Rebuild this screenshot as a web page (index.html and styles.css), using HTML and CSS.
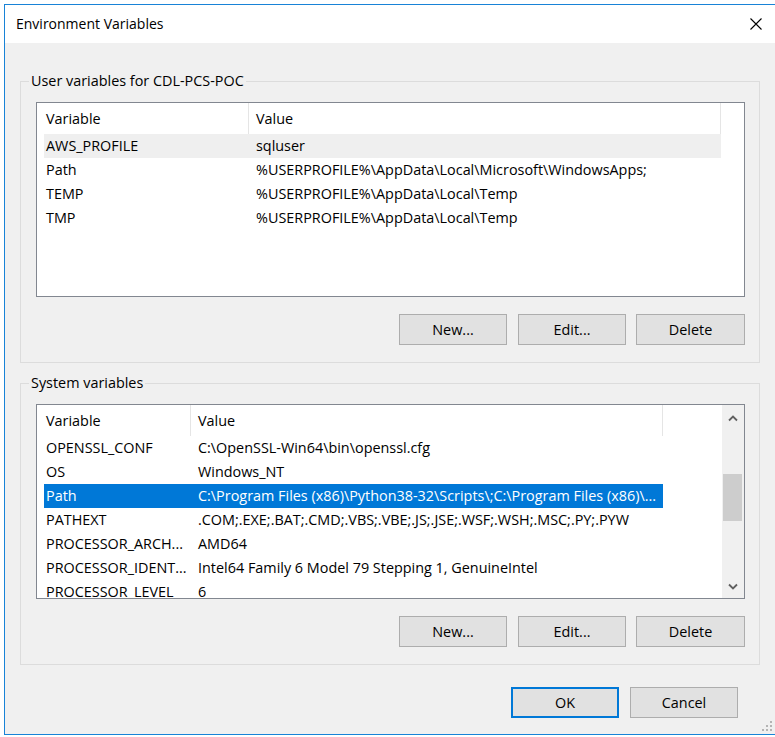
FILE: index.html
```html
<!DOCTYPE html>
<html>
<head>
    <title>Environment Variables</title>
    <meta charset="UTF-8">
    <link rel="stylesheet" href="styles.css">
</head>
<body>
    <div class="window">
        <div class="titlebar">
            <span class="title">Environment Variables</span>
            <span class="close">
                <svg width="12" height="12" viewBox="0 0 12 12"><path d="M0.5 0.5 L11.5 11.5 M11.5 0.5 L0.5 11.5" stroke="#000" stroke-width="1.1" fill="none"/></svg>
            </span>
        </div>

        <div class="client">
            <fieldset class="group">
                <legend>User variables for CDL-PCS-POC</legend>
                <div class="listview user">
                    <div class="lv-main">
                        <div class="lv-header">
                            <div class="hcol c1">Variable</div>
                            <div class="hcol c2">Value</div>
                        </div>
                        <div class="lv-row hot"><span class="cell c1">AWS_PROFILE</span><span class="cell c2">sqluser</span></div>
                        <div class="lv-row"><span class="cell c1">Path</span><span class="cell c2">%USERPROFILE%\AppData\Local\Microsoft\WindowsApps;</span></div>
                        <div class="lv-row"><span class="cell c1">TEMP</span><span class="cell c2">%USERPROFILE%\AppData\Local\Temp</span></div>
                        <div class="lv-row"><span class="cell c1">TMP</span><span class="cell c2">%USERPROFILE%\AppData\Local\Temp</span></div>
                    </div>
                </div>
                <div class="buttons">
                    <button>New...</button>
                    <button>Edit...</button>
                    <button class="wide">Delete</button>
                </div>
            </fieldset>

            <fieldset class="group second">
                <legend>System variables</legend>
                <div class="listview system">
                    <div class="lv-main">
                        <div class="lv-header">
                            <div class="hcol c1">Variable</div>
                            <div class="hcol c2">Value</div>
                        </div>
                        <div class="lv-row"><span class="cell c1">OPENSSL_CONF</span><span class="cell c2">C:\OpenSSL-Win64\bin\openssl.cfg</span></div>
                        <div class="lv-row"><span class="cell c1">OS</span><span class="cell c2">Windows_NT</span></div>
                        <div class="lv-row sel"><span class="cell c1">Path</span><span class="cell c2">C:\Program Files (x86)\Python38-32\Scripts\;C:\Program Files (x86)\...</span></div>
                        <div class="lv-row"><span class="cell c1">PATHEXT</span><span class="cell c2">.COM;.EXE;.BAT;.CMD;.VBS;.VBE;.JS;.JSE;.WSF;.WSH;.MSC;.PY;.PYW</span></div>
                        <div class="lv-row"><span class="cell c1">PROCESSOR_ARCH...</span><span class="cell c2">AMD64</span></div>
                        <div class="lv-row"><span class="cell c1">PROCESSOR_IDENT...</span><span class="cell c2">Intel64 Family 6 Model 79 Stepping 1, GenuineIntel</span></div>
                        <div class="lv-row"><span class="cell c1">PROCESSOR_LEVEL</span><span class="cell c2">6</span></div>
                    </div>
                    <div class="scrollbar">
                        <div class="sb-btn up">
                            <svg width="10" height="7" viewBox="0 0 10 7"><path d="M1 5.5 L5 1.5 L9 5.5" stroke="#606060" stroke-width="1.8" fill="none"/></svg>
                        </div>
                        <div class="sb-track"><div class="sb-thumb"></div></div>
                        <div class="sb-btn down">
                            <svg width="10" height="7" viewBox="0 0 10 7"><path d="M1 1.5 L5 5.5 L9 1.5" stroke="#606060" stroke-width="1.8" fill="none"/></svg>
                        </div>
                    </div>
                </div>
                <div class="buttons">
                    <button>New...</button>
                    <button>Edit...</button>
                    <button class="wide">Delete</button>
                </div>
            </fieldset>

            <div class="dialog-buttons">
                <button class="default">OK</button>
                <button>Cancel</button>
            </div>
        </div>

        <svg class="grip" width="11" height="11" viewBox="0 0 11 11">
            <rect x="8" y="0" width="2" height="2" fill="#b4b4b4"/>
            <rect x="4" y="4" width="2" height="2" fill="#b4b4b4"/>
            <rect x="8" y="4" width="2" height="2" fill="#b4b4b4"/>
            <rect x="0" y="8" width="2" height="2" fill="#b4b4b4"/>
            <rect x="4" y="8" width="2" height="2" fill="#b4b4b4"/>
            <rect x="8" y="8" width="2" height="2" fill="#b4b4b4"/>
        </svg>
    </div>
</body>
</html>
```

FILE: styles.css
```css
body {
    margin: 0;
    background-color: #fff;
    font-family: "Segoe UI", "Open Sans", "Noto Sans", sans-serif;
    font-size: 14.4px;
    color: #000;
    height: 737px;
    overflow: hidden;
}

.window {
    position: relative;
    margin: 4px 0 0 4px;
    width: 772px;
    height: 731px;
    box-sizing: border-box;
    border: 1px solid #1883d7;
    background-color: #f0f0f0;
    display: flex;
    flex-direction: column;
}

.titlebar {
    height: 38px;
    background-color: #fff;
    display: flex;
    align-items: center;
    justify-content: space-between;
    padding-left: 11px;
}

.title {
    font-size: 14px;
    line-height: 20px;
}

.close {
    width: 38px;
    height: 38px;
    display: flex;
    align-items: center;
    justify-content: center;
}

.client {
    flex: 1;
    padding: 28px 15px 0 15px;
}

.group {
    margin: 0;
    border: 1px solid #dcdcdc;
    padding: 11px 14px 17px 15px;
}

.group.second {
    margin-top: 10px;
}

.group legend {
    line-height: 20px;
    padding: 0 2px;
    margin-left: -7px;
}

.listview {
    height: 195px;
    box-sizing: border-box;
    border: 1px solid #828790;
    background-color: #fff;
    display: flex;
    overflow: hidden;
}

.lv-main {
    flex: 1;
    min-width: 0;
    overflow: hidden;
}

.lv-header {
    display: flex;
    height: 31px;
}

.hcol {
    box-sizing: border-box;
    border-right: 1px solid #e5e5e5;
    line-height: 31px;
    padding-left: 9px;
    white-space: nowrap;
}

.hcol.c2 {
    width: 472px;
    padding-left: 7px;
}

.lv-row {
    display: flex;
    height: 24px;
    line-height: 24px;
    margin-left: 7px;
    white-space: nowrap;
}

.lv-row.hot {
    background-color: #efefef;
}

.lv-row.sel {
    background-color: #0078d7;
    color: #fff;
}

.cell {
    box-sizing: border-box;
    overflow: hidden;
}

.cell.c1 {
    padding-left: 2px;
}

.cell.c2 {
    flex: 1;
    padding-left: 8px;
}

.user .hcol.c1 {
    width: 212px;
}

.user .lv-row {
    width: 677px;
}

.user .cell.c1 {
    width: 204px;
}

.system .hcol.c1 {
    width: 154px;
}

.system .lv-row {
    width: 619px;
}

.system .cell.c1 {
    width: 146px;
}

.scrollbar {
    width: 22px;
    background-color: #f0f0f0;
    display: flex;
    flex-direction: column;
}

.sb-btn {
    display: flex;
    align-items: center;
    justify-content: center;
}

.sb-btn.up {
    height: 26px;
}

.sb-btn.down {
    height: 24px;
}

.sb-track {
    flex: 1;
    padding-top: 43px;
}

.sb-thumb {
    height: 47px;
    margin: 0 2px 0 1px;
    background-color: #cdcdcd;
}

.buttons {
    display: flex;
    justify-content: flex-end;
    gap: 11px;
    margin-top: 17px;
}

button {
    width: 108px;
    height: 31px;
    padding: 0;
    font-family: inherit;
    font-size: 14.4px;
    color: #000;
    background-color: #e1e1e1;
    border: 1px solid #adadad;
    border-radius: 0;
}

button.wide {
    width: 109px;
    margin-left: -1px;
}

.dialog-buttons {
    display: flex;
    justify-content: flex-end;
    gap: 11px;
    margin-top: 22px;
    padding-right: 22px;
}

button.default {
    border-color: #0078d7;
    box-shadow: inset 0 0 0 1px #0078d7;
}

.grip {
    position: absolute;
    right: 2px;
    bottom: 2px;
}
```
